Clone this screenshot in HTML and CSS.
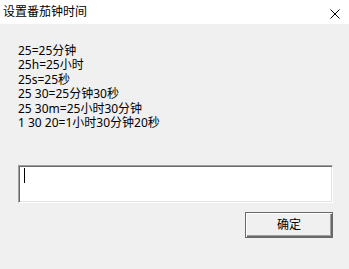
FILE: index.html
```html
<!DOCTYPE html>
<html lang="zh-CN">
<head>
<meta charset="utf-8">
<title>设置番茄钟时间</title>
<link rel="stylesheet" href="styles.css">
</head>
<body>
<div class="dialog">
  <div class="titlebar">
    <span class="title">设置番茄钟时间</span>
    <svg class="close" width="10" height="10" viewBox="0 0 10 10" aria-label="关闭">
      <path d="M0.5 0.5 L9.5 9.5 M9.5 0.5 L0.5 9.5" stroke="#000" stroke-width="1" fill="none"/>
    </svg>
  </div>
  <div class="content">
    <div class="help">
      <div>25=25分钟</div>
      <div>25h=25小时</div>
      <div>25s=25秒</div>
      <div>25 30=25分钟30秒</div>
      <div>25 30m=25小时30分钟</div>
      <div>1 30 20=1小时30分钟20秒</div>
    </div>
    <div class="field"><span class="caret"></span></div>
    <div class="actions">
      <button class="btn">确定</button>
    </div>
  </div>
</div>
</body>
</html>
```

FILE: styles.css
```css
html, body {
  margin: 0;
  padding: 0;
}
body {
  width: 349px;
  height: 269px;
  background: #f0f0f0;
  font-family: "Noto Sans", "Noto Sans CJK SC", sans-serif;
  font-size: 12px;
  color: #000;
  overflow: hidden;
}
.dialog {
  display: flex;
  flex-direction: column;
  height: 100%;
}
.titlebar {
  height: 24px;
  background: #fff;
  display: flex;
  align-items: center;
  justify-content: space-between;
  padding: 0 9px 0 3px;
}
.title {
  font-size: 12px;
  line-height: 24px;
}
.close {
  display: block;
  margin-top: 3px;
}
.content {
  padding: 0 16px 0 18px;
}
.help {
  margin-top: 20px;
  line-height: 14.4px;
  white-space: nowrap;
}
.field {
  margin-top: 35px;
  width: 315px;
  height: 38px;
  box-sizing: border-box;
  background: #fff;
  border: 1px solid;
  border-color: #a0a0a0 #fff #fff #a0a0a0;
  box-shadow: inset 1px 1px 0 #696969, inset -1px -1px 0 #e3e3e3;
  padding: 2px 0 0 5px;
}
.caret {
  display: block;
  width: 1px;
  height: 15px;
  background: #000;
}
.actions {
  display: flex;
  justify-content: flex-end;
  width: 315px;
  margin-top: 9px;
}
.btn {
  width: 88px;
  height: 26px;
  box-sizing: border-box;
  margin: 0;
  padding: 0;
  background: #f0f0f0;
  border: 1px solid #696969;
  box-shadow: inset 1px 1px 0 #fff, inset -1px -1px 0 #696969, inset -2px -2px 0 #a0a0a0;
  font-family: "Noto Sans", "Noto Sans CJK SC", sans-serif;
  font-size: 12px;
  color: #000;
  line-height: 22px;
}
```
